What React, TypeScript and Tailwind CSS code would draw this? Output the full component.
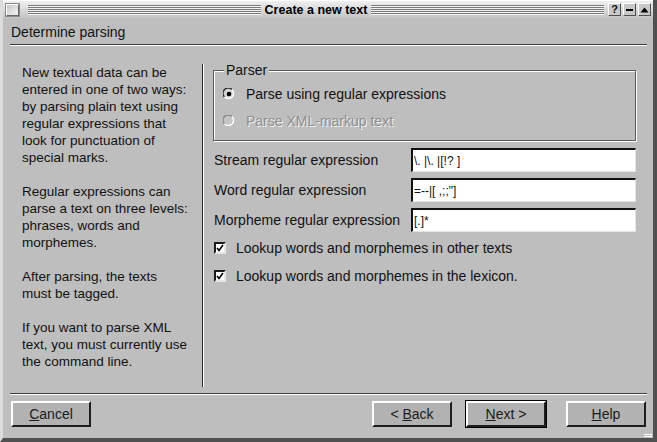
import React from "react";

function TitleLines() {
  return (
    <div className="flex-1 flex flex-col gap-0">
      {[0, 1, 2, 3, 4].map((i) => (
        <div key={i} className="h-[1px] bg-[#7a7a7a] border-b border-b-[#f4f4f4] box-content" />
      ))}
    </div>
  );
}

function TitleButton({ children }: { children: React.ReactNode }) {
  return (
    <div className="w-[13px] h-[13px] flex items-center justify-center bg-[#c8c8c8] border border-t-white border-l-white border-b-[#505050] border-r-[#505050] text-[11px] font-bold leading-none">
      {children}
    </div>
  );
}

function Radio({ checked, disabled }: { checked?: boolean; disabled?: boolean }) {
  return (
    <svg width="12" height="12" viewBox="0 0 12 12" className="shrink-0">
      <circle cx="6" cy="6" r="5" fill={disabled ? "#c4c4c4" : "#d4d4d4"} />
      <path d="M1.5 9 A5 5 0 0 1 9 1.5" fill="none" stroke={disabled ? "#8a8a8a" : "#333"} strokeWidth="1.4" />
      <path d="M9 1.5 A5 5 0 0 1 1.5 9" fill="none" stroke="#fff" strokeWidth="1.4" />
      {checked && <circle cx="6" cy="6" r="2.3" fill="#000" />}
    </svg>
  );
}

function Check() {
  return (
    <div className="w-[12px] h-[12px] shrink-0 bg-white border-2 border-t-[#1a1a1a] border-l-[#1a1a1a] border-b-[#e6e6e6] border-r-[#e6e6e6] flex items-center justify-center">
      <svg width="8" height="8" viewBox="0 0 8 8">
        <path d="M1 4 L3 6.5 L7 1" fill="none" stroke="#000" strokeWidth="1.6" />
      </svg>
    </div>
  );
}

function Field({ label, value }: { label: string; value: string }) {
  return (
    <div className="flex items-center h-[24px]">
      <div className="w-[197px] whitespace-nowrap">{label}</div>
      <div className="flex-1 h-[24px] bg-white border-t-2 border-l-2 border-t-[#111] border-l-[#111] border-b border-r border-b-[#e4e4e4] border-r-[#e4e4e4] flex items-center pl-[1px] text-[12px] leading-none whitespace-pre">
        {value}
      </div>
    </div>
  );
}

function Button({
  children,
  isDefault,
  className,
}: {
  children: React.ReactNode;
  isDefault?: boolean;
  className?: string;
}) {
  return (
    <div className={(isDefault ? "border border-black " : "") + (className ?? "")}>
      <div className="w-[80px] h-[26px] bg-[#b2b2b2] border-2 border-t-white border-l-white border-b-[#1e1e1e] border-r-[#1e1e1e] flex items-center justify-center text-[14px] text-[#1a1a1a]">
        {children}
      </div>
    </div>
  );
}

export default function App() {
  return (
    <div className="w-[657px] h-[442px] bg-[#bebebe] flex flex-col font-['Liberation_Sans',Arial,sans-serif] text-[14px] leading-[16px] text-[#111] border-l-[3px] border-l-[#dcdcdc] border-r-[4px] border-r-[#505050] border-b-[4px] border-b-[#505050] overflow-hidden">
      {/* title bar */}
      <div className="h-[18px] flex items-center bg-gradient-to-b from-[#f0f0f0] to-[#c4c4c4] border-t border-t-white pl-[3px] pr-[2px]">
        <div className="w-[13px] h-[12px] bg-gradient-to-br from-[#c8c8c8] to-[#f4f4f4] border border-t-white border-l-white border-b-[#666] border-r-[#666] shadow-[0_0_0_1px_#8a8a8a]" />
        <div className="w-[9px]" />
        <TitleLines />
        <div className="px-[4px] font-bold text-[12.5px] leading-[14px] text-black whitespace-nowrap">Create a new text</div>
        <TitleLines />
        <div className="flex gap-[2px] ml-[4px]">
          <TitleButton>?</TitleButton>
          <TitleButton>
            <div className="w-[7px] h-[2px] bg-black" />
          </TitleButton>
          <TitleButton>
            <svg width="9" height="6" viewBox="0 0 9 6">
              <path d="M0.5 5.5 L4.5 0.5 L8.5 5.5 Z" fill="#000" />
            </svg>
          </TitleButton>
        </div>
      </div>

      {/* header */}
      <div className="mt-[6px] pl-[8px] h-[16px]">Determine parsing</div>
      <div className="mt-[4px] ml-[7px] mr-[6px] h-[2px] border-t border-t-[#3c3c3c] border-b border-b-white" />

      {/* body */}
      <div className="h-[347px] flex">
        <div className="w-[199px] pl-[19px] pt-[18px] leading-[17px] text-[13.5px] whitespace-nowrap">
          <div>New textual data can be</div>
          <div>entered in one of two ways:</div>
          <div>by parsing plain text using</div>
          <div>regular expressions that</div>
          <div>look for punctuation of</div>
          <div>special marks.</div>
          <div className="mt-[17px]">Regular expressions can</div>
          <div>parse a text on three levels:</div>
          <div>phrases, words and</div>
          <div>morphemes.</div>
          <div className="mt-[17px]">After parsing, the texts</div>
          <div>must be tagged.</div>
          <div className="mt-[17px]">If you want to parse XML</div>
          <div>text, you must currently use</div>
          <div>the command line.</div>
        </div>
        <div className="mt-[18px] h-[323px] w-[2px] border-l border-l-[#2a2a2a] border-r border-r-white" />
        <div className="ml-[10px] w-[422px] pt-[16px]">
          <fieldset className="border border-[#5a5a5a] shadow-[inset_1px_1px_0_#fff,1px_1px_0_#fff] ml-[-1px] pb-[11px]">
            <legend className="ml-[10px] px-[2px] bg-[#bebebe] leading-[16px]">Parser</legend>
            <div className="flex items-center h-[16px] mt-[8px] pl-[9px] gap-[11px]">
              <Radio checked />
              <span>Parse using regular expressions</span>
            </div>
            <div className="flex items-center h-[16px] mt-[11px] pl-[9px] gap-[11px]">
              <Radio disabled />
              <span className="text-[#8e8e8e] [text-shadow:1px_1px_0_#f4f4f4]">Parse XML-markup text</span>
            </div>
          </fieldset>
          <div className="mt-[7px] flex flex-col gap-[6px]">
            <Field label="Stream regular expression" value={"\\. |\\. |[!? ]"} />
            <Field label="Word regular expression" value={"=--|[ ,;;\"]"} />
            <Field label="Morpheme regular expression" value={"[.]*"} />
          </div>
          <div className="mt-[8px] flex items-center h-[16px] gap-[10px]">
            <Check />
            <span>Lookup words and morphemes in other texts</span>
          </div>
          <div className="mt-[12px] flex items-center h-[16px] gap-[10px]">
            <Check />
            <span>Lookup words and morphemes in the lexicon.</span>
          </div>
        </div>
      </div>

      <div className="ml-[7px] mr-[6px] h-[2px] border-t border-t-[#3c3c3c] border-b border-b-white" />

      {/* buttons */}
      <div className="mt-[6px] flex items-start pl-[8px] h-[26px]">
        <Button>
          <span><span className="underline">C</span>ancel</span>
        </Button>
        <div className="flex-1" />
        <Button>
          <span>&lt; <span className="underline">B</span>ack</span>
        </Button>
        <Button isDefault className="ml-[13px] -mt-[1px]">
          <span><span className="underline">N</span>ext &gt;</span>
        </Button>
        <Button className="ml-[19px] mr-[7px]">
          <span><span className="underline">H</span>elp</span>
        </Button>
      </div>
      <div className="flex-1 flex justify-end items-end pr-[1px] pb-[1px]">
        <div className="flex flex-col gap-[1px]">
          <div className="w-[8px] h-[1px] bg-white" />
          <div className="w-[8px] h-[1px] bg-white" />
        </div>
      </div>
    </div>
  );
}
